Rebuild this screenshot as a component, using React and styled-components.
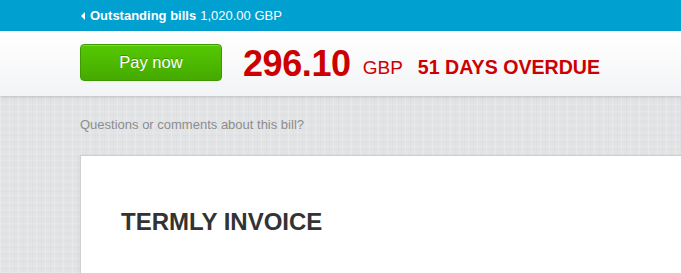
import styled, { createGlobalStyle } from 'styled-components';

const GlobalStyle = createGlobalStyle`
  html, body {
    margin: 0;
    padding: 0;
  }
  body {
    font-family: 'Liberation Sans', Arial, sans-serif;
    background-color: #e2e3e5;
    background-image:
      repeating-linear-gradient(90deg, rgba(255,255,255,0.22) 0 1px, transparent 1px 5px, rgba(0,0,0,0.012) 5px 6px, transparent 6px 9px),
      repeating-linear-gradient(0deg, rgba(255,255,255,0.15) 0 1px, transparent 1px 4px, rgba(0,0,0,0.015) 4px 5px, transparent 5px 7px);
  }
`;

const Page = styled.div`
  width: 100vw;
  height: 100vh;
  overflow: hidden;
`;

const TopBar = styled.div`
  height: 31px;
  background: #00a1d1;
  display: flex;
  align-items: center;
  padding-left: 81px;
  color: #fff;
  font-size: 13px;
`;

const BackArrow = styled.span`
  width: 0;
  height: 0;
  border-top: 4px solid transparent;
  border-bottom: 4px solid transparent;
  border-right: 4px solid #fff;
  margin-right: 5px;
`;

const Strong = styled.b`
  font-weight: 700;
  margin-right: 4px;
`;

const Header = styled.div`
  height: 65px;
  display: flex;
  align-items: center;
  padding: 0 80px;
  background: linear-gradient(#ffffff, #f3f4f6);
  box-shadow: 0 1px 3px rgba(0, 0, 0, 0.18);
  position: relative;
`;

const PayButton = styled.button`
  width: 142px;
  height: 37px;
  margin-top: -2px;
  border: 1px solid #3d9a00;
  border-radius: 4px;
  background: linear-gradient(#55c800, #45aa00);
  box-shadow: inset 0 1px 0 rgba(255, 255, 255, 0.25);
  color: #fff;
  font-family: 'Liberation Sans', Arial, sans-serif;
  font-size: 16.5px;
  text-shadow: 0 -1px 0 rgba(0, 0, 0, 0.25);
  cursor: pointer;
`;

const Amount = styled.span`
  margin-left: 21px;
  color: #cc0000;
  font-size: 36px;
  font-weight: 700;
  letter-spacing: -0.4px;
`;

const Currency = styled.span`
  margin-left: 12px;
  margin-top: 8px;
  color: #cc0000;
  font-size: 19px;
`;

const Overdue = styled.span`
  margin-left: 15px;
  margin-top: 8px;
  color: #cc0000;
  font-size: 19.6px;
  font-weight: 700;
`;

const Main = styled.div`
  padding: 20px 0 0 80px;
`;

const Question = styled.a`
  display: block;
  color: #8c8c8c;
  font-size: 13px;
  line-height: 18px;
  text-decoration: none;
`;

const Card = styled.div`
  margin: 21px -40px 0 0;
  min-height: 160px;
  background: #fff;
  border: 1px solid #cfd0d2;
  box-shadow: 0 0 3px rgba(0, 0, 0, 0.08);
  padding: 52px 0 0 40px;
`;

const Title = styled.h1`
  margin: 0;
  color: #333;
  font-size: 24px;
  font-weight: 700;
`;

export default function App() {
  return (
    <Page>
      <GlobalStyle />
      <TopBar>
        <BackArrow />
        <Strong>Outstanding bills</Strong>
        1,020.00 GBP
      </TopBar>
      <Header>
        <PayButton>Pay now</PayButton>
        <Amount>296.10</Amount>
        <Currency>GBP</Currency>
        <Overdue>51 DAYS OVERDUE</Overdue>
      </Header>
      <Main>
        <Question href="#">Questions or comments about this bill?</Question>
        <Card>
          <Title>TERMLY INVOICE</Title>
        </Card>
      </Main>
    </Page>
  );
}
